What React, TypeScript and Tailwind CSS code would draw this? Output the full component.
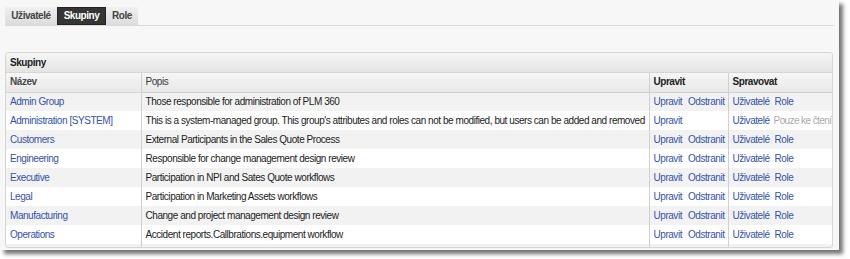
import React from 'react';

type Group = {
  name: string;
  desc: string;
  system?: boolean;
};

const groups: Group[] = [
  { name: 'Admin Group', desc: 'Those responsible for administration of PLM 360' },
  {
    name: 'Administration [SYSTEM]',
    desc: "This is a system-managed group. This group's attributes and roles can not be modified, but users can be added and removed",
    system: true,
  },
  { name: 'Customers', desc: 'External Participants in the Sales Quote Process' },
  { name: 'Engineering', desc: 'Responsible for change management design review' },
  { name: 'Executive', desc: 'Participation in NPI and Sates Quote workflows' },
  { name: 'Legal', desc: 'Participation in Marketing Assets workflows' },
  { name: 'Manufacturing', desc: 'Change and project management design review' },
  { name: 'Operations', desc: 'Accident reports.Callbrations.equipment workflow' },
];

const link = 'text-[#3352ad] cursor-pointer';

function Tabs() {
  return (
    <div className="flex border-b border-[#d9d9d9] mr-[5px] h-[19px]">
      <div className="w-[52px] h-[18px] flex items-center justify-center bg-gradient-to-b from-[#f0f0f0] to-[#dcdcdc] font-bold text-[#444]">
        Uživatelé
      </div>
      <div className="w-[49px] h-[18px] flex items-center justify-center bg-[#353535] border border-[#222] font-bold text-white">
        Skupiny
      </div>
      <div className="w-[32px] h-[18px] flex items-center justify-center bg-gradient-to-b from-[#f0f0f0] to-[#dcdcdc] font-bold text-[#444]">
        Role
      </div>
    </div>
  );
}

export default function App() {
  return (
    <div
      className="w-[850px] h-[259px] bg-white text-[10px] leading-none tracking-[-0.45px]"
      style={{ fontFamily: '"Liberation Sans", Arial, sans-serif' }}
    >
      <div className="w-[839px] h-[250px] bg-[#f7f7f7] pl-[5px] pt-[7px] shadow-[4px_4px_4px_rgba(0,0,0,0.55)]">
        <Tabs />
        <div className="mt-[26px] w-[828px] border border-[#d6d6d6] rounded-[3px] bg-[#f2f2f2] overflow-hidden">
          <div className="h-[20px] flex items-center px-[4px] font-bold text-[#222] bg-gradient-to-b from-[#f5f5f5] to-[#e4e4e4] border-b border-[#d6d6d6]">
            Skupiny
          </div>
          <table className="table-fixed border-collapse w-full">
            <colgroup>
              <col className="w-[135px]" />
              <col className="w-[508px]" />
              <col className="w-[79px]" />
              <col />
            </colgroup>
            <thead>
              <tr className="h-[19px] bg-gradient-to-b from-[#f6f6f6] to-[#e8e8e8]">
                <th className="text-left font-bold text-[#4a4a4a] px-[4px] border-b border-[#d6d6d6]">Název</th>
                <th className="text-left font-normal text-[#3a3a3a] px-[4px] border-b border-l border-[#d0d0d0]">Popis</th>
                <th className="text-left font-bold text-[#222] px-[4px] border-b border-l border-[#d0d0d0]">Upravit</th>
                <th className="text-left font-bold text-[#222] px-[4px] border-b border-l border-[#d0d0d0]">Spravovat</th>
              </tr>
            </thead>
            <tbody>
              {groups.map((g, i) => (
                <tr key={g.name} className={i % 2 === 0 ? 'h-[19px] bg-[#f2f2f2]' : 'h-[19px] bg-white'}>
                  <td className="px-[4px] whitespace-nowrap">
                    <span className={link}>{g.name}</span>
                  </td>
                  <td className="px-[4px] whitespace-nowrap text-[#222] border-l border-[#d0d0d0]">{g.desc}</td>
                  <td className="px-[4px] whitespace-nowrap border-l border-[#d0d0d0]">
                    <span className={link}>Upravit</span>
                    {!g.system && <span className={`${link} ml-[6px]`}>Odstranit</span>}
                  </td>
                  <td className="px-[4px] whitespace-nowrap border-l border-[#d0d0d0]">
                    <span className={link}>Uživatelé</span>
                    {g.system ? (
                      <span className="ml-[4px] text-[#aaa] tracking-[-0.6px]">Pouze ke čtení</span>
                    ) : (
                      <span className={`${link} ml-[5px]`}>Role</span>
                    )}
                  </td>
                </tr>
              ))}
              <tr className="h-[3px]">
                <td />
                <td className="border-l border-[#d0d0d0]" />
                <td className="border-l border-[#d0d0d0]" />
                <td className="border-l border-[#d0d0d0]" />
              </tr>
            </tbody>
          </table>
        </div>
      </div>
    </div>
  );
}
